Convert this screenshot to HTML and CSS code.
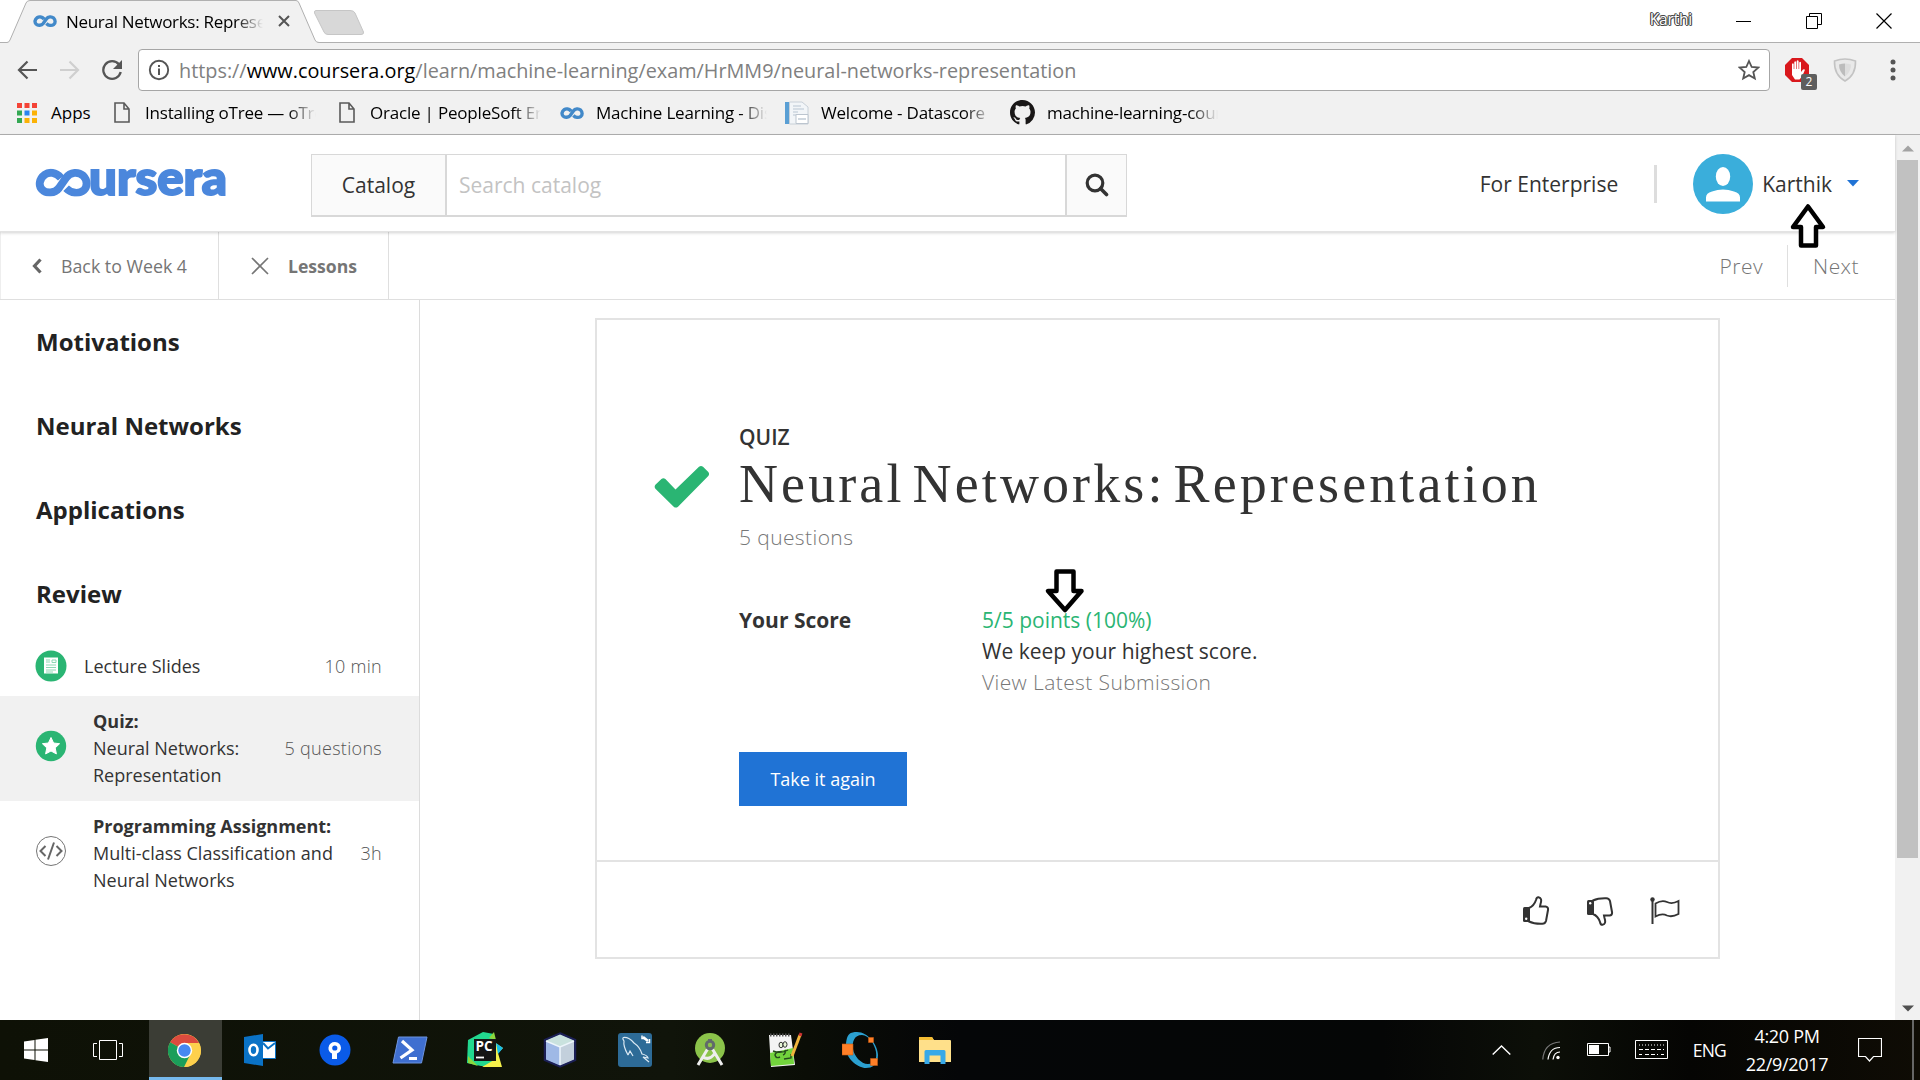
FILE: index.html
```html
<!DOCTYPE html>
<html lang="en">
<head>
<meta charset="utf-8">
<title>Neural Networks: Representation | Coursera</title>
<link rel="stylesheet" href="styles.css">
</head>
<body>
<svg class="defs" width="0" height="0">
  <symbol id="infinity" viewBox="0 0 54 26"><path d="M25 8.500C20 3 13.500 2.500 9.500 5.500C4 9.500 3 16 7 20C11 24 19 23.500 23 18.500L30 8.500C34 2.500 42 2.500 46.500 6.500C51 11 50.500 17.500 47 20.500C42 24.500 35 23.500 30 18.500" fill="none" stroke="currentColor" stroke-width="7.600"/></symbol>
  <symbol id="doc" viewBox="0 0 16 21"><path d="M1 1h9l5 6v13H1zM10 1v6h5" fill="none" stroke="#5a5a5a" stroke-width="1.600"/></symbol>
</svg>

<div class="tabs">
  <svg class="tab-shape" width="370" height="43" viewBox="0 0 370 43"><path d="M0 42.500H7Q9 42.500 10 40L26 3Q27 .5 30 .5H296Q298 .5 299 3L315 40Q316 42.500 319 42.500V43H0z" fill="#f1f1f1"/><path d="M0 42.500H7Q9 42.500 10 40L26 3Q27 .5 30 .5H296Q298 .5 299 3L315 40Q316 42.500 319 42.500" fill="none" stroke="#b0b0b0"/><path d="M316 10.500H350Q354 10.500 355 13L363.500 32Q364 34.500 361 34.500H328Q325 34.500 324 32L314.500 13Q314 10.500 316 10.500z" fill="#d8d8d8" stroke="#c6c6c6"/></svg>
  <div class="tab">
    <svg class="fav" width="24" height="14"><use href="#infinity"/></svg>
    <span class="tab-title">Neural Networks: Representation</span>
    <svg width="12" height="12" viewBox="0 0 12 12"><path d="M1 1l10 10M11 1L1 11" stroke="#555" stroke-width="2"/></svg>
  </div>
  <div class="window-controls">
    <span class="profile">Karthi</span>
    <svg width="16" height="16"><path d="M0 8.500h15" stroke="#000"/></svg>
    <svg width="16" height="16"><path d="M.5 3.500h11v12h-11zM3.500 3.500v-3h12v11h-3.500" fill="none" stroke="#000"/></svg>
    <svg width="16" height="16"><path d="M.5 .5l15 15M15.500 .5l-15 15" stroke="#000" stroke-width="1.200"/></svg>
  </div>
</div>

<div class="toolbar">
  <div class="nav-row">
    <svg class="nav-back" width="21" height="20" viewBox="0 0 21 20"><path d="M20 10H2M10.500 1.500L2 10l8.500 8.500" fill="none" stroke="#555" stroke-width="2.200"/></svg>
    <svg class="nav-fwd" width="21" height="20" viewBox="0 0 21 20"><path d="M1 10h18M10.500 1.500L19 10l-8.500 8.500" fill="none" stroke="#cfcfcf" stroke-width="2.200"/></svg>
    <svg class="nav-reload" width="22" height="22" viewBox="0 0 22 22"><path d="M18 5.500A8.800 8.800 0 1 0 19.700 13" fill="none" stroke="#555" stroke-width="2.300"/><path d="M21 1v9h-9z" fill="#555"/></svg>
    <div class="omnibox">
      <svg width="22" height="22" viewBox="0 0 22 22"><circle cx="11" cy="11" r="9.200" fill="none" stroke="#555" stroke-width="1.900"/><path d="M11 9.500V16M11 6v2" stroke="#555" stroke-width="2"/></svg>
      <span class="url">https://<b>www.coursera.org</b>/learn/machine-learning/exam/HrMM9/neural-networks-representation</span>
      <svg width="22" height="22" viewBox="0 0 22 22"><path d="M11 2l2.700 6 6.600.6-5 4.400 1.500 6.500L11 16.100l-5.800 3.400 1.500-6.500-5-4.400 6.600-.6z" fill="none" stroke="#555" stroke-width="1.800"/></svg>
    </div>
    <div class="ext">
      <svg width="24" height="24" viewBox="0 0 24 24"><path d="M7 0h10l7 7v10l-7 7H7l-7-7V7z" fill="#d9181d"/><path d="M7 13V6q1-1.400 1.700 0v5h.6V4q1-1.500 1.800 0v7h.6V3q1-1.500 1.900 0v8h.6V4.500q1-1.300 1.800 0V14l2-2.500q2-1 1.800.8L17 18.500l-2.500 3H10L7 17z" fill="#fff"/></svg>
      <span class="ext-badge">2</span>
    </div>
    <svg class="shield" width="24" height="24" viewBox="0 0 24 24"><path d="M12 1Q17 1 22.500 3Q23 17 12 23Q1 17 1.500 3Q7 1 12 1z" fill="#e9e9e9" stroke="#c3c3c3" stroke-width="1.600"/><path d="M12 5.500q3 0 6 1Q18 14 12 18.500z" fill="#ddd"/><path d="M12 5.500q-3 0-6 1Q6 14 12 18.500z" fill="#bcbcbc"/></svg>
    <svg class="dots" width="6" height="22"><circle cx="3" cy="3" r="2.500"/><circle cx="3" cy="11" r="2.500"/><circle cx="3" cy="19" r="2.500"/></svg>
  </div>
  <div class="bookmarks">
    <svg class="apps" width="20" height="20" viewBox="0 0 20 20"><path d="M0 0h5v5H0zM7.500 0h5v5h-5zM15 0h5v5h-5z" fill="#f44336"/><path d="M0 7.500h5v5H0zM0 15h5v5H0z" fill="#34a853"/><path d="M7.500 7.500h5v5h-5z" fill="#2a84f0"/><path d="M15 7.500h5v5h-5zM7.500 15h5v5h-5zM15 15h5v5h-5z" fill="#fbb206"/></svg>
    <span class="apps-label">Apps</span>
    <div class="bm"><svg width="16" height="21"><use href="#doc"/></svg><span>Installing oTree — oTree</span></div>
    <div class="bm"><svg width="16" height="21"><use href="#doc"/></svg><span>Oracle | PeopleSoft Enterprise</span></div>
    <div class="bm bm-wide"><svg class="fav" width="24" height="14"><use href="#infinity"/></svg><span>Machine Learning - Discussion</span></div>
    <div class="bm bm-wide"><svg width="24" height="24" viewBox="0 0 24 24"><path d="M0 1h5v22H0z" fill="#5a9fd4"/><path d="M4.500 1H17l6 5v17H4.500z" fill="#f2f5f8" stroke="#c8d0d8"/><path d="M8 5h8M8 8h11M8 11h5M8 14h3" stroke="#cbd5de" stroke-width="1.500"/><path d="M11 13.500h12v9H11z" fill="#fff" stroke="#bcc5cf"/><path d="M13 18h8" stroke="#d0d8e0" stroke-width="2"/></svg><span>Welcome - Datascore</span></div>
    <div class="bm bm-wide"><svg width="25" height="25" viewBox="0 0 16 16"><path fill="#191717" d="M8 0C3.580 0 0 3.580 0 8c0 3.540 2.290 6.530 5.470 7.590.4.070.55-.17.55-.38 0-.19-.01-.82-.01-1.490-2.010.37-2.530-.49-2.690-.94-.09-.23-.48-.94-.82-1.130-.28-.15-.68-.52-.01-.53.63-.01 1.080.58 1.230.82.72 1.210 1.870.87 2.330.66.07-.52.28-.87.51-1.070-1.780-.2-3.640-.89-3.640-3.950 0-.87.31-1.590.82-2.150-.08-.2-.36-1.020.08-2.120 0 0 .67-.21 2.200.82a7.600 7.600 0 0 1 4 0c1.530-1.040 2.200-.82 2.200-.82.44 1.100.16 1.920.08 2.120.51.56.82 1.270.82 2.150 0 3.070-1.870 3.750-3.650 3.950.29.25.54.73.54 1.480 0 1.070-.01 1.930-.01 2.200 0 .21.15.46.55.38A8 8 0 0 0 16 8c0-4.420-3.580-8-8-8z"/></svg><span>machine-learning-coursera</span></div>
  </div>
</div>

<div class="viewport">
  <div class="page">
    <header class="site-header">
      <svg class="logo" width="192" height="28" viewBox="0 0 192 28"><use href="#infinity" x="-1" y="-.5" width="56" height="28"/><text x="53" y="26" textLength="138" lengthAdjust="spacingAndGlyphs">ursera</text></svg>
      <div class="search">
        <span class="catalog">Catalog</span>
        <span class="search-input">Search catalog</span>
        <span class="search-btn"><svg width="24" height="24" viewBox="0 0 24 24"><circle cx="10" cy="10" r="7.800" fill="none" stroke="#333" stroke-width="3.200"/><path d="M15.500 15.500l6 6" stroke="#333" stroke-width="3.600" stroke-linecap="round"/></svg></span>
      </div>
      <div class="account">
        <span class="enterprise">For Enterprise</span>
        <span class="rule"></span>
        <svg width="60" height="60" viewBox="0 0 60 60"><circle cx="30" cy="30" r="30" fill="#3aaedb"/><ellipse cx="30" cy="22.500" rx="7.200" ry="9.500" fill="#fff"/><path d="M13 47.500v-4Q13 39 19 37.500Q30 33.500 41 37.500Q47 39 47 43.500v4z" fill="#fff"/></svg>
        <span class="name">Karthik</span>
        <svg class="caret" width="12" height="7"><path d="M0 0h12L6 6.500z" fill="#2073d5"/></svg>
      </div>
    </header>
    <nav class="subnav">
      <span class="back"><svg width="10" height="16" viewBox="0 0 10 16"><path d="M8.500 1.500L2.500 8l6 6.500" fill="none" stroke="#666" stroke-width="3.200"/></svg>Back to Week 4</span>
      <span class="lessons"><svg width="18" height="18" viewBox="0 0 18 18"><path d="M1 1l16 16M17 1L1 17" stroke="#757575" stroke-width="1.700"/></svg>Lessons</span>
      <span class="pager"><span class="prev">Prev</span><span class="next">Next</span></span>
    </nav>
    <div class="content">
      <aside class="sidebar">
        <h3>Motivations</h3>
        <h3>Neural Networks</h3>
        <h3>Applications</h3>
        <h3>Review</h3>
        <div class="item single">
          <svg width="32" height="32" viewBox="0 0 32 32"><circle cx="16" cy="16" r="15.500" fill="#2ab573"/><path d="M9 7.500h14v16H9z" fill="#fff"/><path d="M11 10h4M11 12h4M17 10h4v2.500h-4zM11 15h10M11 17.500h10M11 20h10M11 22h7" fill="none" stroke="#8ed8b4"/></svg>
          <p>Lecture Slides</p><em>10 min</em>
        </div>
        <div class="item active">
          <svg width="32" height="32" viewBox="0 0 32 32"><circle cx="16" cy="16" r="15.200" fill="#2ab573"/><path d="M16 7.500l2.600 5.500 6 .7-4.400 4.200 1.200 6L16 21l-5.400 2.900 1.200-6-4.400-4.200 6-.7z" fill="#fff" stroke="#fff" stroke-linejoin="round"/></svg>
          <p><b>Quiz:</b><br>Neural Networks: Representation</p><em>5 questions</em>
        </div>
        <div class="item wide">
          <svg width="32" height="32" viewBox="0 0 32 32"><circle cx="16" cy="16" r="14.500" fill="#fff" stroke="#757575"/><path d="M10.500 11l-5 5 5 5M21.500 11l5 5-5 5M19 7.500l-6 17" fill="none" stroke="#666" stroke-width="2"/></svg>
          <p><b>Programming Assignment:</b><br>Multi-class Classification and Neural Networks</p><em>3h</em>
        </div>
      </aside>
      <main class="main">
        <section class="card">
          <div class="card-body">
            <svg class="check" width="56" height="44" viewBox="0 0 56 44"><path d="M1.400 19.800L7.400 14q2-1.400 4 0L21.500 24.500L45 1.800q2-1.500 4 0L54.300 7q1.500 2 0 4L24 41.700q-2.200 1.800-4.300 0L1.400 23.700q-1.500-2 0-3.900z" fill="#2ab573"/></svg>
            <div class="quiz">
              <div class="kind">QUIZ</div>
              <h1>Neural Networks: Representation</h1>
              <div class="count">5 questions</div>
              <div class="score">
                <b>Your Score</b>
                <div>
                  <div class="points">5/5 points (100%)</div>
                  <div class="keep">We keep your highest score.</div>
                  <div class="latest">View Latest Submission</div>
                </div>
              </div>
              <button class="again">Take it again</button>
            </div>
          </div>
          <div class="card-foot">
            <svg width="28" height="30" viewBox="0 0 28 30"><path id="thumb" d="M7 12Q12 10 14 4Q14.500 1 16.500 1.200Q20.500 2 18.500 8L18 10.500H23.500Q26.500 11 26 14L24 25Q23 28 20 27.800Q12 28 7 25.500z" fill="none" stroke="#333" stroke-width="2"/><path d="M1 12.500q0-1.500 1.500-1.500H7v15H2.500Q1 26 1 24.500z" fill="#333"/><circle cx="4.200" cy="22.800" r="1.200" fill="#fff"/></svg>
            <svg width="28" height="30" viewBox="0 0 28 30"><g transform="matrix(1 0 0 -1 0 30)"><use href="#thumb"/><path d="M1 12.500q0-1.500 1.500-1.500H7v15H2.500Q1 26 1 24.500z" fill="#333"/><circle cx="4.200" cy="22.800" r="1.200" fill="#fff"/></g></svg>
            <svg width="30" height="28" viewBox="0 0 30 28"><path d="M2.500 2v25" stroke="#333" stroke-width="2"/><circle cx="2.500" cy="2.500" r="2.200" fill="#333"/><path d="M5.500 6.500Q12 2.500 17 5Q22 7.500 28.500 4V17Q22 20.500 17 18.500Q12 16 5.500 19.500z" fill="none" stroke="#333" stroke-width="1.800"/></svg>
          </div>
        </section>
      </main>
    </div>
  </div>
  <div class="scrollbar">
    <svg width="12" height="7"><path d="M0 6.500L6 .5l6 6z" fill="#a3a3a3"/></svg>
    <div class="thumb"></div>
    <svg class="down" width="12" height="7"><path d="M0 .5h12L6 6.500z" fill="#505050"/></svg>
  </div>
</div>

<footer class="taskbar">
  <span class="sys"><svg width="24" height="24" viewBox="0 0 24 24"><path d="M0 3.500L10.500 2v9.500H0zM11.500 1.800L24 0v11.500H11.500zM0 12.500h10.500V22L0 20.500zM11.500 12.500H24V24l-12.500-1.800z" fill="#fff"/></svg></span>
  <span class="sys"><svg width="30" height="20" viewBox="0 0 30 20"><path d="M6.500 .5h17v19h-17zM4 3.500H.5v13H4M26 3.500h3.500v13H26" fill="none" stroke="#fff"/></svg></span>
  <span class="app current"><svg width="33" height="33" viewBox="0 0 33 33"><circle cx="16.500" cy="16.500" r="16.500" fill="#fdd04c"/><path d="M16.500 16.500L2.200 8.200A16.500 16.500 0 0 1 31 9H16.500z" fill="#dc4b3e"/><path d="M16.500 16.500L2.200 8.200A16.500 16.500 0 0 0 17 33l6.500-12.500z" fill="#1b9e5a"/><path d="M22 21l-6 12q6 .2 11-4Q33 24 33 16 32.800 12 31 9H16.500z" fill="#fdd04c"/><circle cx="16.500" cy="16.500" r="7.700" fill="#fff"/><circle cx="16.500" cy="16.500" r="6.200" fill="#4688f1"/></svg></span>
  <span class="app"><svg width="32" height="32" viewBox="0 0 32 32"><path d="M18 7.500h13.500v17H18z" fill="#fff" stroke="#0a72c6"/><path d="M19 9l5 5.500L31 9" fill="none" stroke="#0a72c6" stroke-width="2"/><path d="M0 3l19-3v32L0 29z" fill="#0a72c6"/><ellipse cx="9.500" cy="16" rx="4" ry="5.300" fill="none" stroke="#fff" stroke-width="2.600"/></svg></span>
  <span class="app"><svg width="32" height="32" viewBox="0 0 32 32"><circle cx="16" cy="16" r="15.500" fill="#0a5be8"/><path d="M13 25v-5.500Q9 17.500 9.500 13.500 10.500 8 16 8q5.500.5 6 6-.2 4-4 5.500V25z" fill="#fff"/><circle cx="15.800" cy="14" r="2.600" fill="#0a5be8"/></svg></span>
  <span class="app"><svg width="36" height="28" viewBox="0 0 36 28"><path d="M6.500 1H35L29.500 27H1z" fill="#3f6fd0" stroke="#6d94df"/><path d="M10 5l10 9L8.500 22" fill="none" stroke="#fff" stroke-width="3.200"/><path d="M17 22.500h8" stroke="#fff" stroke-width="3"/></svg></span>
  <span class="app"><svg width="36" height="36" viewBox="0 0 36 36"><path d="M1 8L16 0 27 2v32H14L0 31z" fill="#22d88f"/><path d="M22 6l5-6 2 8zM1 24l10 10-10-3z" fill="#8bd83d"/><path d="M27 10l9 6-5 5 4 14H15L27 28z" fill="#f4f04b"/><path d="M29 11l7 5-5 6z" fill="#15bde8"/><path d="M7 7h22v22H7z" fill="#151515"/><path d="M9 25.500h8" stroke="#fff" stroke-width="1.800"/><text x="8.500" y="19" class="pc">PC</text></svg></span>
  <span class="app"><svg width="34" height="36" viewBox="0 0 34 36"><path d="M17 1.500L32 8v20L17 34.500 2 28V8z" fill="#a9c3e6" stroke="#1b1f55" stroke-width="2.500"/><path d="M17 2.500L31 8.500 17 15 3 8.500z" fill="#c9e2de"/><path d="M3 9l14 6v18.500L3 27.500z" fill="#9fb9e6"/><path d="M31 9l-14 6v18.500l14-6z" fill="#c3d0dc"/><path d="M3 9l14 6 14-6M17 15v18" fill="none" stroke="#edf5fb" stroke-width="1.500"/></svg></span>
  <span class="app"><svg width="34" height="34" viewBox="0 0 34 34"><rect width="34" height="34" rx="3" fill="#2d6b97"/><path d="M10 22Q5 13 6 8 4 5 5.500 4.500 11 4 16 10 22 14 24 21q5 1 6 4l-5-1 6 5M10 22l2-4 3 5" fill="none" stroke="#dbe9f3" stroke-width="1.200"/><path d="M25 4l5 4" stroke="#fff" stroke-width="2.600"/><path d="M24 2.500v3h3M28 9.500h3.500V6" fill="none" stroke="#fff" stroke-width="1.500"/></svg></span>
  <span class="app"><svg width="32" height="36" viewBox="0 0 32 36"><circle cx="16" cy="16" r="15" fill="#8bc34a"/><path d="M16 13L4 33M16 13l12 20M8.500 25q7.500 4 12.500-4" fill="none" stroke="#eee" stroke-width="3"/><circle cx="16" cy="13" r="3.700" fill="#8bc34a" stroke="#616a6b" stroke-width="3"/><path d="M16 7v3" stroke="#616a6b" stroke-width="4"/></svg></span>
  <span class="app"><svg width="36" height="36" viewBox="0 0 36 36"><path d="M2 3h22l4 30-24 2z" fill="#f4f4f4"/><path d="M3 21l23-5 1 16-23 2z" fill="#72d33c"/><path d="M3 3h20" stroke="#555" stroke-width="3" stroke-dasharray="1.500 1.500"/><path d="M6 19q8 3 15-1M15 20q-6-1-7 3 1 4 5 2M17 27l7-1v-4M18 18q1 4-2 5" fill="none" stroke="#264b1d" stroke-width="1.400"/><ellipse cx="14" cy="13" rx="2" ry="2.800" fill="#e7f6d6" stroke="#333"/><ellipse cx="18" cy="12.500" rx="2" ry="2.800" fill="#e7f6d6" stroke="#333"/><path d="M33 3l-8 21" stroke="#f0b43c" stroke-width="3"/><path d="M34 1l-1 3" stroke="#c33" stroke-width="3"/></svg></span>
  <span class="app"><svg width="36" height="36" viewBox="0 0 36 36"><path fill-rule="evenodd" d="M15 0C26 0 36 13 36 23S30 36 24 36 4 29 4 15 9 0 15 0zM20 3C12 3 10 10 11 17s8 15 15 15 9-5 8-12S27 3 20 3z" fill="#2ba0d0"/><path d="M0 12h11v11H0zM26.500 5.500h5v5h-5zM28.500 26.500h7v7h-7z" fill="#ff7f27" stroke="#c75b12" stroke-width=".6"/></svg></span>
  <span class="app"><svg width="32" height="28" viewBox="0 0 32 28"><path d="M0 2q0-1 1-1h12l2 3h16q1 0 1 1v21H0z" fill="#ffe08a"/><path d="M0 4V2q0-1 1-1h12l1.500 3z" fill="#f5bd33"/><path d="M5.500 28V15.500q0-1.500 1.500-1.500h18q1.500 0 1.500 1.500V28h-5v-8.500h-11V28z" fill="#38a9e8"/></svg></span>
  <div class="tray">
    <svg class="up" width="19" height="10"><path d="M.7 9.500l8.800-8.500 8.800 8.500" fill="none" stroke="#fff" stroke-width="1.400"/></svg>
    <svg class="wifi" width="19" height="19" viewBox="0 0 19 19"><circle cx="16" cy="16.500" r="1.700" fill="#fff"/><path d="M18 11q-6 0-7 7.500M18 6.500Q7.500 6.500 6 18.500" fill="none" stroke="#fff" stroke-width="1.200"/><path d="M18 1Q2 2 .8 18.500" fill="none" stroke="#777" stroke-width="1.200"/></svg>
    <svg class="battery" width="24" height="14"><path d="M.5 .5h21v12H.5zM22 4h1v5h-1" fill="none" stroke="#fff"/><path d="M2 2h10v9H2z" fill="#fff"/></svg>
    <svg class="keyboard" width="33" height="20"><path d="M.5 .5h32v18H.5z" fill="none" stroke="#fff"/><path d="M4 5h25" stroke="#fff" stroke-dasharray="1 2"/><path d="M4 9.500h25M4 14.500h3M10 14.500h13M26 14.500h3" stroke="#fff" stroke-dasharray="4 2"/></svg>
    <span class="lang">ENG</span>
    <div class="clock">4:20 PM<br>22/9/2017</div>
    <svg class="notice" width="24" height="24"><path d="M.5 .5h23v18h-8l-4 4.500-4-4.500h-7z" fill="none" stroke="#fff" stroke-width="1.200"/></svg>
    <span class="show-desktop"></span>
  </div>
</footer>

<svg class="mark mark-up" width="38" height="46" viewBox="0 0 38 46"><path d="M19 3.500L34 24H27V42.500H12V24H4z" fill="#fff" stroke="#000" stroke-width="4.500" stroke-linejoin="round"/></svg>
<svg class="mark mark-down" width="42" height="46" viewBox="0 0 42 46"><path d="M12.500 3.500H29.500V23H37.500L21 42 4 23H12.500z" fill="#fff" stroke="#000" stroke-width="4.500" stroke-linejoin="round"/></svg>
</body>
</html>
```
FILE: styles.css
```css
* { box-sizing: border-box; }
body { margin: 0; width: 1920px; height: 1080px; overflow: hidden; background: #fff; color: #333; font-family: "Open Sans", "Noto Sans", sans-serif; font-size: 18px; display: flex; flex-direction: column; position: relative; }
svg { display: block; flex: none; }
span, b, em { white-space: nowrap; }
.defs { position: absolute; }
.fav { color: #4289c9; }

/* browser frame */
.tabs { height: 43px; flex: none; border-bottom: 1px solid #b0b0b0; display: flex; align-items: center; position: relative; color: #000; }
.tab-shape { position: absolute; left: 0; top: 0; }
.tab { position: relative; display: flex; align-items: center; padding-left: 33px; width: 640px; }
.tab-title { margin-left: 9px; width: 197px; margin-right: 15px; overflow: hidden; font-size: 17px; letter-spacing: -.3px; -webkit-mask-image: linear-gradient(90deg, #000 86%, transparent); mask-image: linear-gradient(90deg, #000 86%, transparent); }
.window-controls { margin-left: auto; padding-right: 28px; display: flex; align-items: center; gap: 54px; }
.profile { font-size: 15.5px; letter-spacing: -.2px; color: #fff; text-shadow: 1px 0 #444, -1px 0 #444, 0 1px #444, 0 -1px #444, 1px 1px #777, -1px -1px #777; margin-right: -10px; margin-top: -4px; }
.toolbar { height: 92px; flex: none; background: #f1f1f1; border-bottom: 1px solid #b0b0b0; color: #000; }
.nav-row { display: flex; align-items: center; height: 48px; padding: 6px 24px 0 17px; }
.nav-fwd { margin-left: 21px; }
.nav-reload { margin: 0 15px 0 21px; }
.omnibox { flex: none; width: 1632px; height: 42px; border: 1px solid #a6a6a6; border-radius: 4px; background: #fff; display: flex; align-items: center; padding: 0 9px; }
.url { flex: 1; margin-left: 9px; font-size: 19.83px; color: #808080; }
.url b { font-weight: 400; color: #000; }
.ext { position: relative; margin-left: 15px; }
.ext-badge { position: absolute; left: 16px; top: 16px; width: 16px; height: 16px; border-radius: 2px; background: #5e5e5e; color: #fff; font-size: 12px; line-height: 16px; text-align: center; }
.shield { margin-left: 24px; }
.dots { margin-left: auto; fill: #555; }
.bookmarks { display: flex; align-items: center; height: 43px; padding-left: 17px; font-size: 17px; letter-spacing: -.2px; }
.apps-label { margin-left: 14px; width: 63px; letter-spacing: 0; }
.bm { display: flex; align-items: center; width: 225px; gap: 15px; }
.bm span { width: 171px; overflow: hidden; -webkit-mask-image: linear-gradient(90deg, #000 84%, transparent); mask-image: linear-gradient(90deg, #000 84%, transparent); }
.bm-wide { gap: 12px; margin-left: -4px; width: 229px; }

/* page */
.viewport { height: 885px; flex: none; display: flex; }
.page { width: 1895px; display: flex; flex-direction: column; }
.site-header { height: 97px; flex: none; display: flex; align-items: center; padding: 5px 36px 0 36px; border-bottom: 1px solid #e3e3e3; box-shadow: 0 1px 3px rgba(0,0,0,.18); position: relative; font-size: 21px; }
.logo { color: #4b87dc; fill: #4b87dc; font: 900 48px Lato, "Open Sans", sans-serif; margin-top: -6px; overflow: visible; }
.logo text { stroke: #4b87dc; stroke-width: 2px; }
.search { margin-left: 83px; width: 816px; height: 63px; border: 1px solid #d8d8d8; border-bottom-width: 2px; display: flex; align-items: stretch; line-height: 61px; }
.catalog { width: 135px; text-align: center; background: #fafafa; border-right: 2px solid #d8d8d8; }
.search-input { flex: 1; padding-left: 12px; color: #c3c3c3; }
.search-btn { width: 61px; border-left: 2px solid #d8d8d8; background: #fafafa; display: flex; align-items: center; justify-content: center; }
.account { margin-left: auto; display: flex; align-items: center; margin-top: -4px; }
.rule { width: 3px; height: 38px; background: #ddd; margin: 0 36px; }
.name { margin-left: 9px; margin-right: 15px; }
.subnav { height: 68px; flex: none; display: flex; border-bottom: 1px solid #dfdfdf; color: #757575; align-items: stretch; line-height: 66px; }
.back { width: 219px; padding-left: 31px; display: flex; align-items: center; gap: 19px; border-right: 1px solid #dfdfdf; border-left: 1px solid #eee; font-size: 17.8px; }
.lessons { width: 170px; padding-left: 32px; display: flex; align-items: center; gap: 19px; border-right: 1px solid #dfdfdf; font-weight: 700; font-size: 17.6px; }
.pager { margin-left: auto; padding: 1px 36px 0 0; display: flex; align-items: center; font-size: 21px; font-weight: 300; letter-spacing: .45px; }
.prev { border-right: 1px solid #dfdfdf; line-height: 42px; padding-right: 24px; margin-right: 25px; }
.content { flex: 1; display: flex; }
.sidebar { width: 420px; border-right: 1px solid #dcdcdc; }
.sidebar h3 { margin: 0; padding-left: 36px; height: 84px; line-height: 84px; font-size: 24px; font-weight: 700; color: #222; }
.item { display: flex; align-items: center; padding: 0 37px 0 35px; height: 105px; line-height: 27px; }
.item.single { height: 60px; }
.item.active { background: #f1f1f1; }
.item.active svg, .item.wide svg { margin-top: -6px; }
.item p { margin: 0 auto 0 26px; width: 170px; }
.item.wide p { width: 250px; margin-right: 0; }
.item.single p { margin-left: 17px; }
.item em { margin-left: auto; font-style: normal; font-weight: 300; color: #555; letter-spacing: .3px; }
.main { flex: 1; padding: 18px 0 0 175px; }
.card { width: 1125px; border: 2px solid #e3e3e3; height: 641px; display: flex; flex-direction: column; }
.card-body { height: 540px; flex: none; display: flex; padding: 102px 0 0 57px; font-size: 21px; line-height: 31px; }
.check { margin-top: 43px; }
.quiz { margin-left: 29px; flex: 1; }
.kind { font-weight: 600; }
h1 { margin: 0; font: 400 54px/62px "Liberation Serif", serif; letter-spacing: 3.1px; word-spacing: -8.5px; white-space: nowrap; }
.count { margin-top: 7px; color: #777; font-weight: 300; letter-spacing: .4px; }
.score { margin-top: 52px; display: grid; grid-template-columns: 243px 1fr; }
.score b { font-weight: 700; }
.points { color: #2ab573; }
.latest { color: #777; font-weight: 300; letter-spacing: .4px; }
.again { margin-top: 54px; display: block; width: 168px; height: 54px; border: 0; padding: 0; background: #2073d5; color: #fff; font: 400 18px "Open Sans", sans-serif; }
.card-foot { flex: 1; border-top: 2px solid #e3e3e3; display: flex; align-items: center; justify-content: flex-end; gap: 36px; padding: 2px 38px 0 0; }
.scrollbar { flex: 1; background: #f1f1f1; display: flex; flex-direction: column; align-items: center; padding-top: 10px; }
.thumb { width: 21px; height: 698px; background: #c1c1c1; margin-top: 8px; }
.down { margin-top: 147px; }

/* taskbar */
.taskbar { height: 60px; flex: none; display: flex; background: linear-gradient(90deg, #0e1106, #10140a 35%, #0a0d06 42%, #050608 50%, #050606 72%, #0c0f08 80%, #050503 88%, #0f0c05); color: #fff; }
.sys, .app { display: flex; align-items: center; justify-content: center; }
.sys { width: 72px; }
.app { width: 73px; margin-right: 2px; padding-right: 2px; }
.current { margin-left: 5px; background: #3b3d35; border-bottom: 3px solid #76b9ed; padding-top: 3px; }
.pc { font: 700 13.500px "Open Sans", sans-serif; fill: #fff; }
.tray { margin-left: auto; display: flex; align-items: center; }
.wifi { margin-left: 31px; }
.battery { margin-left: 26px; }
.keyboard { margin-left: 24px; }
.lang { width: 58px; text-align: right; font-size: 17.5px; letter-spacing: -.8px; }
.clock { width: 122px; text-align: center; font-size: 18px; line-height: 28px; letter-spacing: -.3px; }
.notice { margin-left: 10px; }
.show-desktop { margin-left: 30px; align-self: stretch; width: 8px; border-left: 2px solid #666; }

/* hand-drawn arrows over the page */
.mark { position: absolute; }
.mark-up { left: 1789px; top: 203px; }
.mark-down { left: 1044px; top: 568px; }
```
